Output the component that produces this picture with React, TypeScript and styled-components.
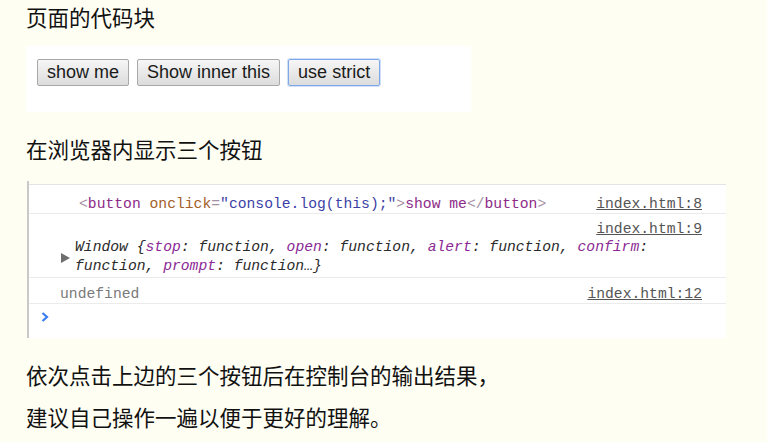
import React from "react";
import styled, { createGlobalStyle } from "styled-components";

const Global = createGlobalStyle`
  html, body { margin: 0; padding: 0; background: #fefef3; }
  body { font-family: "Noto Sans CJK SC", "Noto Sans", sans-serif; color: #111; }
`;

const Page = styled.div`
  padding: 2px 0 0 26px;
  width: 741px;
  box-sizing: border-box;
`;

const Text = styled.p<{ $mt?: number }>`
  margin: ${(p) => p.$mt ?? 0}px 0 0 0;
  font-family: "Noto Sans CJK SC", sans-serif;
  font-size: 21.5px;
  line-height: 30px;
  color: #111;
`;

const DemoBox = styled.div`
  margin-top: 14px;
  width: 445px;
  height: 66px;
  box-sizing: border-box;
  background: #ffffff;
  padding: 13px 0 0 11px;
  display: flex;
  gap: 8px;
  align-items: flex-start;
`;

const Btn = styled.button<{ $focused?: boolean }>`
  height: 27px;
  box-sizing: border-box;
  padding: 0 9px;
  font-family: "Liberation Sans", Arial, sans-serif;
  font-size: 18px;
  color: #1a1a1a;
  border-radius: 2px;
  background: linear-gradient(#f6f6f6, #dcdcdc);
  border: 1px solid ${(p) => (p.$focused ? "#7fa8ea" : "#a8a8a8")};
  box-shadow: ${(p) => (p.$focused ? "0 0 0 1px rgba(150,185,240,0.45)" : "none")};
  line-height: 25px;
  cursor: pointer;
`;

const Console = styled.div`
  margin: 17px 0 0 1px;
  width: 699px;
  box-sizing: border-box;
  border-left: 2px solid #c9c9c9;
  padding-top: 3px;
`;

const ConsoleInner = styled.div`
  background: #ffffff;
  border-top: 1px solid #e4e4e4;
  font-family: "Liberation Mono", Consolas, monospace;
  font-size: 14.7px;
  color: #333;
`;

const Row = styled.div<{ $pt: number; $pb?: number; $indent?: number; $last?: boolean }>`
  padding: ${(p) => p.$pt}px 24px ${(p) => p.$pb ?? 0}px ${(p) => 31 + (p.$indent ?? 0)}px;
  border-bottom: ${(p) => (p.$last ? "none" : "1px solid #ebebeb")};
  line-height: 18px;
  display: flex;
  align-items: flex-start;
  justify-content: space-between;
  white-space: nowrap;
`;

const Stack = styled.div`
  display: flex;
  flex-direction: column;
  flex: 1;
`;

const LinkLine = styled.div`
  display: flex;
  justify-content: flex-end;
`;

const Src = styled.span`
  color: #555;
  text-decoration: underline;
`;

const Tag = styled.span<{ $c: string }>`
  color: ${(p) => p.$c};
`;

const ObjRow = styled.div`
  display: flex;
  align-items: center;
  margin-left: 1px;
`;

const Triangle = styled.svg`
  width: 9px;
  height: 10px;
  margin-right: 5px;
  margin-top: 1px;
  flex: none;
`;

const ObjText = styled.div`
  font-style: italic;
  line-height: 19px;
  white-space: normal;
  width: 600px;
  color: #2a2a2a;
`;

const Key = styled.span`
  color: #8b2a95;
`;

const Undef = styled.span`
  color: #7a7a7a;
`;

const PromptRow = styled.div`
  height: 34px;
  box-sizing: border-box;
  padding: 8px 0 0 12px;
`;

const Chevron = styled.svg`
  width: 8px;
  height: 10px;
  display: block;
`;

const C = {
  bracket: "#a58fa4",
  tag: "#8d2b88",
  attr: "#a35e2a",
  val: "#3d3fa6",
};

export default function App() {
  return (
    <>
      <Global />
      <Page>
        <Text>页面的代码块</Text>
        <DemoBox>
          <Btn>show me</Btn>
          <Btn>Show inner this</Btn>
          <Btn $focused>use strict</Btn>
        </DemoBox>
        <Text $mt={22}>在浏览器内显示三个按钮</Text>
        <Console>
          <ConsoleInner>
            <Row $pt={10} $indent={19}>
              <span>
                <Tag $c={C.bracket}>&lt;</Tag>
                <Tag $c={C.tag}>button</Tag>{" "}
                <Tag $c={C.attr}>onclick</Tag>
                <Tag $c={C.bracket}>=</Tag>
                <Tag $c={C.val}>"console.log(this);"</Tag>
                <Tag $c={C.bracket}>&gt;</Tag>
                <Tag $c={C.tag}>show me</Tag>
                <Tag $c={C.bracket}>&lt;/</Tag>
                <Tag $c={C.tag}>button</Tag>
                <Tag $c={C.bracket}>&gt;</Tag>
              </span>
              <Src>index.html:8</Src>
            </Row>
            <Row $pt={6} $pb={1}>
              <Stack>
                <LinkLine>
                  <Src>index.html:9</Src>
                </LinkLine>
                <ObjRow>
                  <Triangle viewBox="0 0 9 10">
                    <polygon points="0,0 9,5 0,10" fill="#6e6e6e" />
                  </Triangle>
                  <ObjText>
                    Window {"{"}
                    <Key>stop</Key>: function, <Key>open</Key>: function, <Key>alert</Key>: function,{" "}
                    <Key>confirm</Key>: function, <Key>prompt</Key>: function…{"}"}
                  </ObjText>
                </ObjRow>
              </Stack>
            </Row>
            <Row $pt={7}>
              <Undef>undefined</Undef>
              <Src>index.html:12</Src>
            </Row>
            <PromptRow>
              <Chevron viewBox="0 0 8 10">
                <polyline
                  points="1.5,1 6,5 1.5,9"
                  fill="none"
                  stroke="#3a7ef0"
                  strokeWidth="2.2"
                />
              </Chevron>
            </PromptRow>
          </ConsoleInner>
        </Console>
        <Text $mt={22}>依次点击上边的三个按钮后在控制台的输出结果，</Text>
        <Text $mt={12}>建议自己操作一遍以便于更好的理解。</Text>
      </Page>
    </>
  );
}
